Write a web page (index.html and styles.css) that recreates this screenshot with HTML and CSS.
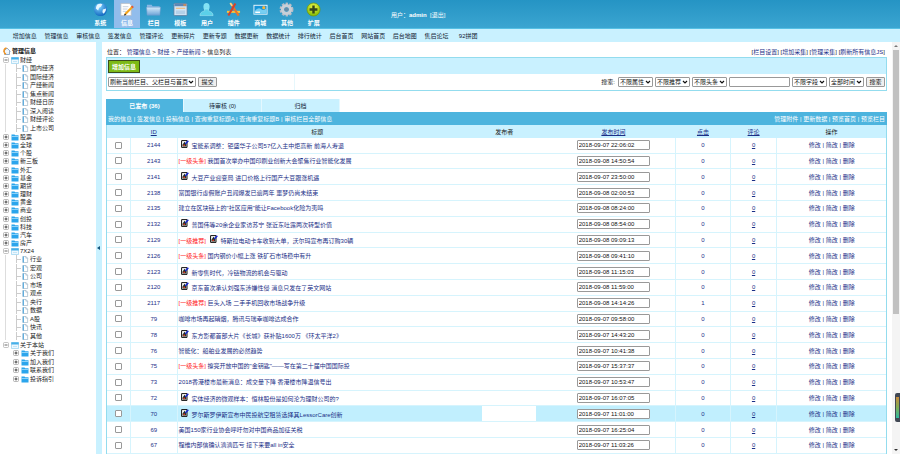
FILE: index.html
```html
<!DOCTYPE html>
<html lang="zh-CN">
<head>
<meta charset="utf-8">
<title>信息管理</title>
<link rel="stylesheet" href="styles.css">
</head>
<body>
<svg class="sprite" aria-hidden="true">
  <defs>
    <linearGradient id="gBlue" x1="0" y1="0" x2="0" y2="1"><stop offset="0" stop-color="#d4ebfa"/><stop offset="1" stop-color="#6fa5d8"/></linearGradient>
    <radialGradient id="gGlobe" cx=".4" cy=".3" r=".75"><stop offset="0" stop-color="#7fd4ff"/><stop offset="1" stop-color="#0c62bd"/></radialGradient>
    <radialGradient id="gLime" cx=".5" cy=".3" r=".7"><stop offset="0" stop-color="#eef94a"/><stop offset="1" stop-color="#82b800"/></radialGradient>
  </defs>
  <symbol id="doc" viewBox="0 0 7 8"><path d="M1 .5h3.5l2 2v5H1z" fill="#fff" stroke="#8fa9bd" stroke-width=".7"/><path d="M1 .5h1.2v7H1z" fill="#4aa5dc"/><path d="M4.500.5v2h2" fill="none" stroke="#8fa9bd" stroke-width=".6"/></symbol>
  <symbol id="fold" viewBox="0 0 8 7"><path d="M.5.5h3l.7.8h3.300v5.200h-7z" fill="#2ba5ec"/><path d="M.5 2.500h7" stroke="#b9e6ff" stroke-width=".7"/></symbol>
  <symbol id="open" viewBox="0 0 8 7"><path d="M.5.500h7v6h-7z" fill="#eef8fe" stroke="#84c9ed" stroke-width=".6"/><path d="M.3.3h7.400v2.200H.3z" fill="#45afe8"/><path d="M2 4.500h4" stroke="#a6d8f1" stroke-width=".6"/></symbol>
  <symbol id="plus" viewBox="0 0 6 6"><rect x=".5" y=".5" width="5" height="5" rx="1" fill="#fff" stroke="#999" stroke-width=".7"/><path d="M1.500 3h3M3 1.500v3" stroke="#222" stroke-width=".8"/></symbol>
  <symbol id="minus" viewBox="0 0 6 6"><rect x=".5" y=".5" width="5" height="5" rx="1" fill="#fff" stroke="#aaa" stroke-width=".7"/><path d="M1.500 3h3" stroke="#444" stroke-width=".8"/></symbol>
  <symbol id="pic" viewBox="0 0 8 8"><path d="M.6.600h5.400v6.800H.6z" fill="#fff" stroke="#111" stroke-width="1"/><path d="M1.500 4.800l1.900-3 1.800 2v2.700H1.500z" fill="#1b2c20"/><path d="M2.200 4.600h2v1.500h-2z" fill="#d23a2b"/><path d="M4.300 4.100L7.300.8" stroke="#1526d0" stroke-width="1.500"/></symbol>
</svg>

<header class="top">
  <nav class="modules" aria-label="模块">
    <a href="#"><svg viewBox="0 0 16 16"><circle cx="8" cy="8" r="7" fill="url(#gGlobe)"/><path d="M5 2.500q3-1.500 5 0L8.500 5 6.500 6 5.500 9 3 7q.3-3 2-4.500zM10.500 8l3.500-1q0 3.500-2.500 5.500L10 11z" fill="#e6f7ff"/></svg><span>系统</span></a>
    <a href="#" class="on"><svg viewBox="0 0 16 16"><path d="M2 1.500h9l2 2v11H2z" fill="#fff" stroke="#b7bcc4" stroke-width=".8"/><path d="M4 5h6M4 7.500h5M4 10h4" stroke="#b5c2d4" stroke-width=".8"/><path d="M6.500 13l8-8" stroke="#f2a41f" stroke-width="2.300"/><path d="M13.700 5.800l1.300-1.300" stroke="#e1573d" stroke-width="2.500"/><path d="M5.600 14l1.700-1" stroke="#333" stroke-width="1.300"/></svg><span>信息</span></a>
    <a href="#"><svg viewBox="0 0 16 16"><path d="M1 3h5l1 1.500h7.500v9H1z" fill="#88b8e4"/><path d="M.5 5.500h15l-.8 8.500H1.300z" fill="url(#gBlue)" stroke="#6e9ccc" stroke-width=".6"/></svg><span>栏目</span></a>
    <a href="#"><svg viewBox="0 0 16 16"><rect x="1" y="1.500" width="14" height="13" rx="1" fill="#d3e6f5" stroke="#5a7899" stroke-width=".8"/><path d="M1.500 2h13v2.500h-13z" fill="#5e87b5"/><path d="M11 3.200h3" stroke="#f38d36" stroke-width="1.400"/><path d="M3 6h10v1.500H3z" fill="#eec08b"/><path d="M3 9h10v4H3z" fill="#b3d0e8"/></svg><span>模板</span></a>
    <a href="#"><svg viewBox="0 0 16 16"><ellipse cx="8" cy="5" rx="3.300" ry="4" fill="#83e2f4"/><path d="M1 14.500q0-4 5-5v-2h4v2q5 1 5 5z" fill="#5bd0e9" stroke="#a6eef8" stroke-width=".6"/></svg><span>用户</span></a>
    <a href="#"><svg viewBox="0 0 16 16"><path d="M1 10.500h14" stroke="#f5c43c" stroke-width="2.200"/><path d="M5 1.500l8.500 13" stroke="#e8742a" stroke-width="2.200"/><path d="M10 1.500L2.500 14.500" stroke="#d3402b" stroke-width="2.200"/><path d="M4.500 1l2 3" stroke="#f7d88b" stroke-width="1.800"/></svg><span>插件</span></a>
    <a href="#"><svg viewBox="0 0 16 16"><path d="M.5 3h15v10.500H.5z" fill="#f0f8fc"/><path d="M1.500 4h13v8.500h-13z" fill="#1695d9"/><path d="M1.500 10q4-5 7-2.500t6-1v6h-13z" fill="#77cff2"/><circle cx="11.500" cy="6" r="1.700" fill="#f6b33a"/><path d="M2.500 11h5" stroke="#fff" stroke-width="1.500"/></svg><span>商城</span></a>
    <a href="#"><svg viewBox="0 0 16 16"><circle cx="8" cy="8" r="6" fill="none" stroke="#b7bdc7" stroke-width="2.800" stroke-dasharray="2.500 1.300"/><circle cx="8" cy="8" r="4.200" fill="none" stroke="#c9cfd7" stroke-width="3.400"/><circle cx="8" cy="8" r="2.200" fill="#668da8"/></svg><span>其他</span></a>
    <a href="#"><svg viewBox="0 0 16 16"><circle cx="8" cy="8" r="7" fill="url(#gLime)" stroke="#6b9313" stroke-width=".7"/><path d="M8 3.800v8.400M3.800 8h8.400" stroke="#34461a" stroke-width="2.600"/></svg><span>扩展</span></a>
  </nav>
  <p class="user">用户：<b>admin</b>&nbsp; <a href="#">[退出]</a></p>
</header>

<nav class="quick" aria-label="快捷菜单">
  <div class="quick-list">
    <a href="#">增加信息</a><a href="#">管理信息</a><a href="#">审核信息</a><a href="#">签发信息</a><a href="#">管理评论</a><a href="#">更新碎片</a><a href="#">更新专题</a><a href="#">数据更新</a><a href="#">数据统计</a><a href="#">排行统计</a><a href="#">后台首页</a><a href="#">网站首页</a><a href="#">后台地图</a><a href="#">售后论坛</a><a href="#">92拼团</a>
  </div>
</nav>

<div class="body">
  <aside class="side">
    <h2><svg viewBox="0 0 8 8"><path d="M.5 4.500L4 1l3.500 3.500M1.500 4v3.500h5V4" fill="#e9f3fb" stroke="#7897b5" stroke-width=".8"/><path d="M3.500 1Q.8 1.500 1 4.500q.3 2 2 2.500" fill="none" stroke="#f29422" stroke-width="1.500"/></svg>管理信息</h2>
    <ul class="tree">
      <li><div class="node"><svg class="pm"><use href="#minus"/></svg><svg class="ic"><use href="#open"/></svg><a href="#">财经</a></div>
        <ul class="leaves">
          <li><svg class="ic"><use href="#doc"/></svg><a href="#">国内经济</a></li>
          <li><svg class="ic"><use href="#doc"/></svg><a href="#">国际经济</a></li>
          <li><svg class="ic"><use href="#doc"/></svg><a href="#">产经新闻</a></li>
          <li><svg class="ic"><use href="#doc"/></svg><a href="#">焦点新闻</a></li>
          <li><svg class="ic"><use href="#doc"/></svg><a href="#">财经日历</a></li>
          <li><svg class="ic"><use href="#doc"/></svg><a href="#">深入阅读</a></li>
          <li><svg class="ic"><use href="#doc"/></svg><a href="#">财经评论</a></li>
          <li><svg class="ic"><use href="#doc"/></svg><a href="#">上市公司</a></li>
        </ul>
      </li>
      <li><div class="node"><svg class="pm"><use href="#plus"/></svg><svg class="ic"><use href="#fold"/></svg><a href="#">股票</a></div></li>
      <li><div class="node"><svg class="pm"><use href="#plus"/></svg><svg class="ic"><use href="#fold"/></svg><a href="#">全球</a></div></li>
      <li><div class="node"><svg class="pm"><use href="#plus"/></svg><svg class="ic"><use href="#fold"/></svg><a href="#">个股</a></div></li>
      <li><div class="node"><svg class="pm"><use href="#plus"/></svg><svg class="ic"><use href="#fold"/></svg><a href="#">新三板</a></div></li>
      <li><div class="node"><svg class="pm"><use href="#plus"/></svg><svg class="ic"><use href="#fold"/></svg><a href="#">外汇</a></div></li>
      <li><div class="node"><svg class="pm"><use href="#plus"/></svg><svg class="ic"><use href="#fold"/></svg><a href="#">基金</a></div></li>
      <li><div class="node"><svg class="pm"><use href="#plus"/></svg><svg class="ic"><use href="#fold"/></svg><a href="#">期货</a></div></li>
      <li><div class="node"><svg class="pm"><use href="#plus"/></svg><svg class="ic"><use href="#fold"/></svg><a href="#">理财</a></div></li>
      <li><div class="node"><svg class="pm"><use href="#plus"/></svg><svg class="ic"><use href="#fold"/></svg><a href="#">黄金</a></div></li>
      <li><div class="node"><svg class="pm"><use href="#plus"/></svg><svg class="ic"><use href="#fold"/></svg><a href="#">商业</a></div></li>
      <li><div class="node"><svg class="pm"><use href="#plus"/></svg><svg class="ic"><use href="#fold"/></svg><a href="#">创投</a></div></li>
      <li><div class="node"><svg class="pm"><use href="#plus"/></svg><svg class="ic"><use href="#fold"/></svg><a href="#">科技</a></div></li>
      <li><div class="node"><svg class="pm"><use href="#plus"/></svg><svg class="ic"><use href="#fold"/></svg><a href="#">汽车</a></div></li>
      <li><div class="node"><svg class="pm"><use href="#plus"/></svg><svg class="ic"><use href="#fold"/></svg><a href="#">房产</a></div></li>
      <li><div class="node"><svg class="pm"><use href="#minus"/></svg><svg class="ic"><use href="#open"/></svg><a href="#">7X24</a></div>
        <ul class="leaves">
          <li><svg class="ic"><use href="#doc"/></svg><a href="#">行业</a></li>
          <li><svg class="ic"><use href="#doc"/></svg><a href="#">宏观</a></li>
          <li><svg class="ic"><use href="#doc"/></svg><a href="#">公司</a></li>
          <li><svg class="ic"><use href="#doc"/></svg><a href="#">市场</a></li>
          <li><svg class="ic"><use href="#doc"/></svg><a href="#">观点</a></li>
          <li><svg class="ic"><use href="#doc"/></svg><a href="#">央行</a></li>
          <li><svg class="ic"><use href="#doc"/></svg><a href="#">数据</a></li>
          <li><svg class="ic"><use href="#doc"/></svg><a href="#">A股</a></li>
          <li><svg class="ic"><use href="#doc"/></svg><a href="#">快讯</a></li>
          <li><svg class="ic"><use href="#doc"/></svg><a href="#">其他</a></li>
        </ul>
      </li>
      <li><div class="node"><svg class="pm"><use href="#minus"/></svg><svg class="ic"><use href="#open"/></svg><a href="#">关于本站</a></div>
        <ul class="branches">
          <li class="node"><svg class="pm"><use href="#plus"/></svg><svg class="ic"><use href="#fold"/></svg><a href="#">关于我们</a></li>
          <li class="node"><svg class="pm"><use href="#plus"/></svg><svg class="ic"><use href="#fold"/></svg><a href="#">加入我们</a></li>
          <li class="node"><svg class="pm"><use href="#plus"/></svg><svg class="ic"><use href="#fold"/></svg><a href="#">联系我们</a></li>
          <li class="node"><svg class="pm"><use href="#plus"/></svg><svg class="ic"><use href="#fold"/></svg><a href="#">投诉指引</a></li>
        </ul>
      </li>
    </ul>
  </aside>
  <div class="splitter"><svg viewBox="0 0 3 4"><path d="M3 0v4L0 2z" fill="#12527a"/></svg></div>

  <main class="main">
    <div class="crumbs">
      <p>位置： <a href="#">管理信息</a> &gt; <a href="#">财经</a> &gt; <a href="#">产经新闻</a> &gt; 信息列表</p>
      <p>[<a href="#">栏目设置</a>] [<a href="#">增加采集</a>] [<a href="#">管理采集</a>] [<a href="#">刷新所有信息JS</a>]</p>
    </div>
    <section class="panel">
      <div class="panel-top"><button class="add" type="button">增加信息</button></div>
      <div class="filters">
        <form class="refresh">
          <select aria-label="刷新范围"><option>刷新当前栏目、父栏目与首页</option></select>
          <button type="button">提交</button>
        </form>
        <form class="search">
          <label for="kw">搜索:</label>
          <select aria-label="属性"><option>不限属性</option></select>
          <select aria-label="推荐"><option>不限推荐</option></select>
          <select aria-label="头条"><option>不限头条</option></select>
          <input id="kw" type="text">
          <select aria-label="字段"><option>不限字段</option></select>
          <select aria-label="时间"><option>全部时间</option></select>
          <button type="button">搜索</button>
        </form>
      </div>
    </section>
    <nav class="tabs"><a href="#" class="on">已发布 (36)</a><a href="#">待审核 (0)</a><a href="#">归档</a></nav>
    <div class="actions">
      <p><a href="#">我的信息</a> | <a href="#">签发信息</a> | <a href="#">投稿信息</a> | <a href="#">查询重复标题A</a> | <a href="#">查询重复标题B</a> | <a href="#">审核栏目全部信息</a></p>
      <p><a href="#">管理附件</a> | <a href="#">更新数据</a> | <a href="#">预览首页</a> | <a href="#">预览栏目</a></p>
    </div>
    <div class="list">
    <table>
      <colgroup><col class="c-check"><col class="c-id"><col class="c-title"><col class="c-author"><col class="c-time"><col class="c-hits"><col class="c-talk"><col class="c-ops"></colgroup>
      <thead><tr><th></th><th><a href="#">ID</a></th><th>标题</th><th>发布者</th><th><a href="#">发布时间</a></th><th><a href="#">点击</a></th><th><a href="#">评论</a></th><th>操作</th></tr></thead>
      <tbody>
        <tr><td><input type="checkbox" aria-label="2144"></td><td>2144</td><td><svg class="pic"><use href="#pic"/></svg><a href="#">宝能系调整：钜盛华子公司57亿入主中炬高新 前海人寿退</a></td><td></td><td><input type="text" aria-label="发布时间" value="2018-09-07 22:06:02"></td><td>0</td><td><a href="#">0</a></td><td><a href="#">修改</a> | <a href="#">简改</a> | <a href="#">删除</a></td></tr>
        <tr><td><input type="checkbox" aria-label="2143"></td><td>2143</td><td><em>[一级头条]</em> <a href="#">我国首次举办中国印刷业创新大会聚焦行业智能化发展</a></td><td></td><td><input type="text" aria-label="发布时间" value="2018-09-08 14:50:54"></td><td>0</td><td><a href="#">0</a></td><td><a href="#">修改</a> | <a href="#">简改</a> | <a href="#">删除</a></td></tr>
        <tr><td><input type="checkbox" aria-label="2141"></td><td>2141</td><td><svg class="pic"><use href="#pic"/></svg><a href="#">大豆产业迎变局 进口价格上行国产大豆跟涨机遇</a></td><td></td><td><input type="text" aria-label="发布时间" value="2018-09-07 23:50:00"></td><td>0</td><td><a href="#">0</a></td><td><a href="#">修改</a> | <a href="#">简改</a> | <a href="#">删除</a></td></tr>
        <tr><td><input type="checkbox" aria-label="2138"></td><td>2138</td><td><a href="#">富国银行虚假账户丑闻爆发已逾两年 噩梦仍尚未结束</a></td><td></td><td><input type="text" aria-label="发布时间" value="2018-09-08 02:00:53"></td><td>0</td><td><a href="#">0</a></td><td><a href="#">修改</a> | <a href="#">简改</a> | <a href="#">删除</a></td></tr>
        <tr><td><input type="checkbox" aria-label="2135"></td><td>2135</td><td><a href="#">建立在区块链上的"社区应用"能让Facebook化险为夷吗</a></td><td></td><td><input type="text" aria-label="发布时间" value="2018-09-08 08:24:00"></td><td>0</td><td><a href="#">0</a></td><td><a href="#">修改</a> | <a href="#">简改</a> | <a href="#">删除</a></td></tr>
        <tr><td><input type="checkbox" aria-label="2132"></td><td>2132</td><td><svg class="pic"><use href="#pic"/></svg><a href="#">普国伟等20余企业家访苏宁 张近东吐露两次转型价值</a></td><td></td><td><input type="text" aria-label="发布时间" value="2018-09-08 08:54:00"></td><td>0</td><td><a href="#">0</a></td><td><a href="#">修改</a> | <a href="#">简改</a> | <a href="#">删除</a></td></tr>
        <tr><td><input type="checkbox" aria-label="2129"></td><td>2129</td><td><em>[一级推荐]</em> <svg class="pic"><use href="#pic"/></svg><a href="#">特斯拉电动卡车收到大单，沃尔玛宣布再订购30辆</a></td><td></td><td><input type="text" aria-label="发布时间" value="2018-09-08 09:09:13"></td><td>0</td><td><a href="#">0</a></td><td><a href="#">修改</a> | <a href="#">简改</a> | <a href="#">删除</a></td></tr>
        <tr><td><input type="checkbox" aria-label="2126"></td><td>2126</td><td><em>[一级头条]</em> <a href="#">国内钢价小幅上涨 铁矿石市场稳中有升</a></td><td></td><td><input type="text" aria-label="发布时间" value="2018-09-08 09:41:10"></td><td>0</td><td><a href="#">0</a></td><td><a href="#">修改</a> | <a href="#">简改</a> | <a href="#">删除</a></td></tr>
        <tr><td><input type="checkbox" aria-label="2123"></td><td>2123</td><td><svg class="pic"><use href="#pic"/></svg><a href="#">新零售时代，冷链物流的机会与驱动</a></td><td></td><td><input type="text" aria-label="发布时间" value="2018-09-08 11:15:03"></td><td>0</td><td><a href="#">0</a></td><td><a href="#">修改</a> | <a href="#">简改</a> | <a href="#">删除</a></td></tr>
        <tr><td><input type="checkbox" aria-label="2120"></td><td>2120</td><td><svg class="pic"><use href="#pic"/></svg><a href="#">京东首次承认刘强东涉嫌性侵 消息只发在了英文网站</a></td><td></td><td><input type="text" aria-label="发布时间" value="2018-09-08 11:59:00"></td><td>0</td><td><a href="#">0</a></td><td><a href="#">修改</a> | <a href="#">简改</a> | <a href="#">删除</a></td></tr>
        <tr><td><input type="checkbox" aria-label="2117"></td><td>2117</td><td><em>[一级推荐]</em> <a href="#">巨头入场 二手手机回收市场战争升级</a></td><td></td><td><input type="text" aria-label="发布时间" value="2018-09-08 14:14:26"></td><td>1</td><td><a href="#">0</a></td><td><a href="#">修改</a> | <a href="#">简改</a> | <a href="#">删除</a></td></tr>
        <tr><td><input type="checkbox" aria-label="79"></td><td>79</td><td><a href="#">咖啡市场再起硝烟，腾讯与瑞幸咖啡达成合作</a></td><td></td><td><input type="text" aria-label="发布时间" value="2018-09-07 09:58:00"></td><td>0</td><td><a href="#">0</a></td><td><a href="#">修改</a> | <a href="#">简改</a> | <a href="#">删除</a></td></tr>
        <tr><td><input type="checkbox" aria-label="78"></td><td>78</td><td><svg class="pic"><use href="#pic"/></svg><a href="#">东方影都首部大片《长城》获补贴1600万 《环太平洋2》</a></td><td></td><td><input type="text" aria-label="发布时间" value="2018-09-07 14:43:20"></td><td>0</td><td><a href="#">0</a></td><td><a href="#">修改</a> | <a href="#">简改</a> | <a href="#">删除</a></td></tr>
        <tr><td><input type="checkbox" aria-label="76"></td><td>76</td><td><a href="#">智能化：船舶业发展的必然趋势</a></td><td></td><td><input type="text" aria-label="发布时间" value="2018-09-07 10:41:38"></td><td>0</td><td><a href="#">0</a></td><td><a href="#">修改</a> | <a href="#">简改</a> | <a href="#">删除</a></td></tr>
        <tr><td><input type="checkbox" aria-label="75"></td><td>75</td><td><em>[一级头条]</em> <a href="#">擦亮开放中国的"金钥匙"——写在第二十届中国国际投</a></td><td></td><td><input type="text" aria-label="发布时间" value="2018-09-07 15:37:37"></td><td>0</td><td><a href="#">0</a></td><td><a href="#">修改</a> | <a href="#">简改</a> | <a href="#">删除</a></td></tr>
        <tr><td><input type="checkbox" aria-label="73"></td><td>73</td><td><a href="#">2018香港楼市最新消息：成交量下降 香港楼市降温信号出</a></td><td></td><td><input type="text" aria-label="发布时间" value="2018-09-07 10:53:47"></td><td>0</td><td><a href="#">0</a></td><td><a href="#">修改</a> | <a href="#">简改</a> | <a href="#">删除</a></td></tr>
        <tr><td><input type="checkbox" aria-label="72"></td><td>72</td><td><svg class="pic"><use href="#pic"/></svg><a href="#">实体经济的微观样本：恒林股份是如何沦为理财公司的?</a></td><td></td><td><input type="text" aria-label="发布时间" value="2018-09-07 16:07:05"></td><td>0</td><td><a href="#">0</a></td><td><a href="#">修改</a> | <a href="#">简改</a> | <a href="#">删除</a></td></tr>
        <tr class="hot"><td><input type="checkbox" aria-label="70"></td><td>70</td><td><svg class="pic"><use href="#pic"/></svg><a href="#">罗尔斯罗伊斯宣布中民投航空租赁选择其LessorCare创新</a></td><td></td><td><input type="text" aria-label="发布时间" value="2018-09-07 11:01:00"></td><td>0</td><td><a href="#">0</a></td><td><a href="#">修改</a> | <a href="#">简改</a> | <a href="#">删除</a></td></tr>
        <tr><td><input type="checkbox" aria-label="69"></td><td>69</td><td><a href="#">美国150家行业协会呼吁勿对中国商品加征关税</a></td><td></td><td><input type="text" aria-label="发布时间" value="2018-09-07 16:25:04"></td><td>0</td><td><a href="#">0</a></td><td><a href="#">修改</a> | <a href="#">简改</a> | <a href="#">删除</a></td></tr>
        <tr><td><input type="checkbox" aria-label="67"></td><td>67</td><td><a href="#">程维内部信确认滴滴匹亏 接下来要all in安全</a></td><td></td><td><input type="text" aria-label="发布时间" value="2018-09-07 11:03:26"></td><td>0</td><td><a href="#">0</a></td><td><a href="#">修改</a> | <a href="#">简改</a> | <a href="#">删除</a></td></tr>
      </tbody>
    </table>
    </div>
  </main>
  <div class="scroll" aria-hidden="true"><i class="up"></i><i class="thumb"></i><i class="down"></i></div>
  <div class="meter" aria-hidden="true"><i></i></div>
</div>
</body>
</html>
```

FILE: styles.css
```css
* { box-sizing: border-box; }

body {
  margin: 0;
  height: 100vh;
  display: flex;
  flex-direction: column;
  overflow: hidden;
  background: #fff;
  color: #222;
  font: 6px/8px "Liberation Sans", "Noto Sans CJK SC", sans-serif;
  white-space: nowrap;
}

p, h2, ul { margin: 0; padding: 0; }
li { list-style: none; }
a { color: inherit; text-decoration: none; }
svg { flex: none; }
.sprite { position: absolute; width: 0; height: 0; }

button, select, input { font: inherit; color: #111; margin: 0; }

/* header */
.top {
  display: flex;
  height: 29px;
  padding-left: 87px;
  background: linear-gradient(#2594c4, #3ba5d1);
  border-bottom: 1px solid #55bfe4;
  color: #fff;
}
.modules {
  display: grid;
  grid-template-columns: repeat(9, 1fr);
  width: 240px;
}
.modules a {
  display: flex;
  flex-direction: column;
  align-items: center;
  padding-top: 2px;
  font-weight: bold;
}
.modules svg { width: 15px; height: 15px; margin-bottom: 2px; }
.modules .on { background: #92bdec; }
.user { padding: 11px 0 0 64px; }

/* quick menu */
.quick { background: #c9f1ff; padding: 3px 0 2px 9px; }
.quick-list {
  display: grid;
  grid-template-columns: repeat(15, 1fr);
  width: 475px;
  text-align: center;
  color: #123;
}

.body { position: relative; flex: 1; min-height: 0; display: flex; }

/* category tree */
.side { width: 96px; padding: 5px 0 0 3px; }
.side h2 { display: flex; align-items: center; font-size: 6px; gap: 1px; color: #111; margin-bottom: 1px; }
.side h2 svg { width: 8px; height: 8px; }
.tree > li:nth-child(6n) { margin-top: 1px; }
.node { display: flex; align-items: center; height: 8px; }
.pm { width: 6px; height: 6px; margin-right: 2px; }
.ic { width: 8px; height: 7px; }
.node a { margin-left: 1px; }
.leaves {
  margin: 0 0 1px 2px;
  padding-left: 10px;
  border-left: 1px solid #ddd;
}
.leaves li {
  display: flex;
  align-items: center;
  height: 8px;
  border-left: 1px solid #ccc;
}
.leaves li::before { content: ""; width: 4px; border-top: 1px solid #ccc; }
.leaves li a { margin-left: 1px; }
.leaves li:nth-child(even), .branches li:nth-child(even) { margin-top: 1px; }
.branches { padding-left: 10px; }

.splitter { width: 6px; background: #c9f1ff; display: flex; align-items: center; }
.splitter svg { width: 3px; height: 4px; margin-left: 1px; }

/* main column */
.main {
  flex: 1;
  min-width: 0;
  display: flex;
  flex-direction: column;
  padding: 0 5px 0 4px;
}
.crumbs { display: flex; justify-content: space-between; padding: 6px 2px 1px 1px; }
.crumbs a { color: #1b2f87; }

.panel { border: 1px solid #93dcee; }
.panel-top { background: #c9f1ff; padding: 2px 1px; height: 16px; }
.add {
  display: block;
  width: 32px;
  height: 13px;
  padding: 0;
  border: 1px solid #3c4c1c;
  background: #7cba16;
  color: #fff;
  font-weight: bold;
}
.filters { display: flex; justify-content: space-between; height: 16px; padding: 0 1px; }
.filters form { display: flex; align-items: center; gap: 2px; }
.refresh { width: 187px; border-right: 1px solid #e6f7fc; }
.refresh select { width: 88px; }
.search label { margin-right: 1px; }
.search select { width: 35px; }
.search input { width: 61px; }
.filters select, .filters input, .filters button {
  height: 10px;
  border: 1px solid #999;
  border-radius: 1px;
  background-color: #fff;
  padding: 0 1px;
}
.filters select {
  appearance: none;
  background-image: url("data:image/svg+xml,%3Csvg xmlns='http://www.w3.org/2000/svg' viewBox='0 0 6 4'%3E%3Cpath d='M1 1l2 2 2-2' fill='none' stroke='%23111' stroke-width='1.2'/%3E%3C/svg%3E");
  background-size: 6px 4px;
  background-position: right 1px center;
  background-repeat: no-repeat;
}
.filters button { width: 19px; background-color: #efefef; }

.tabs { display: flex; margin-top: 8px; color: #123; }
.tabs a {
  width: 78px;
  padding: 3px 0 2px;
  background: #c9f1ff;
  border-right: 1px solid #e4f8ff;
  text-align: center;
}
.tabs .on { background: #4db4de; color: #fff; font-weight: bold; }

.actions {
  display: flex;
  justify-content: space-between;
  padding: 3px 2px 2px;
  background: #4db4de;
  color: #fff;
}

/* article list */
.list { flex: 1; min-height: 0; border: solid #93dcee; border-width: 0 1px; }
table { width: 100%; height: 100%; table-layout: fixed; border-collapse: collapse; }
.c-check { width: 3%; }
.c-id { width: 6%; }
.c-author { width: 12%; }
.c-time { width: 16%; }
.c-hits { width: 7%; }
.c-talk { width: 6%; }
.c-ops { width: 14%; }
th { height: 13px; padding: 0; background: #c9f1ff; font-weight: normal; }
th a { text-decoration: underline; color: #1b2f87; }
td {
  padding: 0;
  text-align: center;
  color: #1b2f87;
  border: solid #d6f4fd;
  border-width: 0 1px 1px 0;
}
td:nth-child(3) { text-align: left; padding-left: 1px; border-right: 0; }
td:nth-child(4) { padding: 0 15px 0 24px; background: #fff content-box; border-right: 0; }
td:nth-child(7) a { text-decoration: underline; }
td:last-child { border-right: 0; }
em { font-style: normal; color: #f22; }
.hot { background: #c1effe; }
.pic { width: 8px; height: 8px; margin: 0 3px 0 2px; }
td input { display: block; margin: 0 auto; border: 1px solid #999; border-radius: 1px; background: #fff; }
td input[type="checkbox"] { appearance: none; width: 7px; height: 7px; }
td input[type="text"] { width: 73px; height: 10px; padding: 0 1px; }

/* right edge */
.scroll { width: 8px; display: flex; flex-direction: column; align-items: center; background: #f4f4f4; padding: 3px 0; }
.up, .down { border: 2px solid transparent; }
.up { border-top: 0; border-bottom-color: #777; }
.down { border-bottom: 0; border-top-color: #333; margin-top: auto; }
.thumb { width: 6px; height: 65%; margin-top: 3px; background: #c1c1c1; }
.meter {
  position: absolute;
  right: 0;
  bottom: 32px;
  width: 5px;
  height: 29px;
  padding: 4px 1px;
  border-radius: 2px 0 0 2px;
  background: #414854;
}
.meter i { display: block; height: 100%; background: linear-gradient(#c98a3c, #7fae55, #2fb9a0); }
```
